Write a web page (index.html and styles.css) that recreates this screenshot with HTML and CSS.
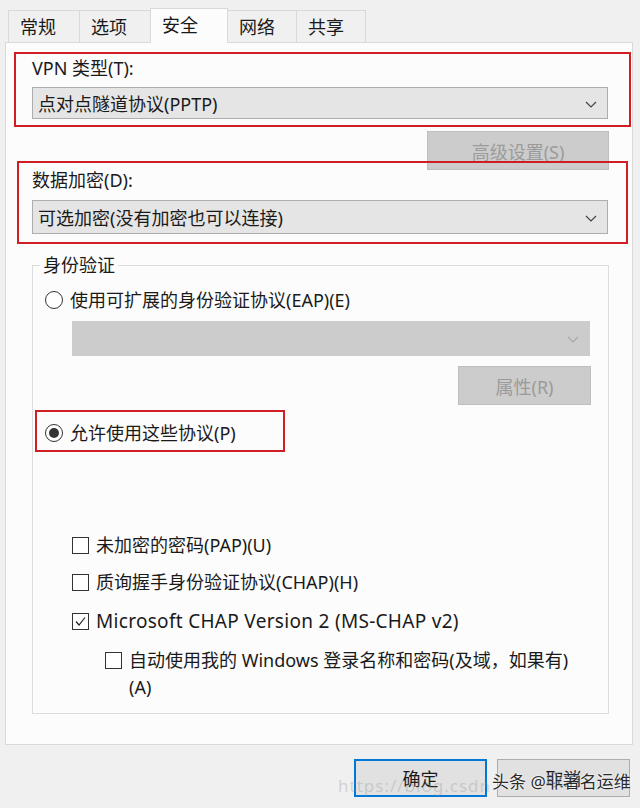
FILE: index.html
```html
<!DOCTYPE html>
<html lang="zh-CN">
<head>
    <meta charset="UTF-8">
    <meta name="viewport" content="width=device-width, initial-scale=1.0">
    <title>VPN 属性 - 安全</title>
    <link rel="stylesheet" href="styles.css">
</head>
<body>
    <div class="window">
        <!-- tab strip -->
        <div class="tabs">
            <div class="tab">常规</div>
            <div class="tab">选项</div>
            <div class="tab active">安全</div>
            <div class="tab">网络</div>
            <div class="tab">共享</div>
        </div>

        <div class="panel">
            <div class="mark mark-vpn">
                <div class="label">VPN 类型(T):</div>
                <div class="combo">
                    <span>点对点隧道协议(PPTP)</span>
                    <svg class="chevron" width="12" height="7" viewBox="0 0 12 7"><polyline points="1,1 6,6 11,1" fill="none" stroke="#444" stroke-width="1.2"/></svg>
                </div>
            </div>

            <div class="btn-row adv-row">
                <div class="btn disabled adv">高级设置(S)</div>
            </div>

            <div class="mark mark-enc">
                <div class="label">数据加密(D):</div>
                <div class="combo combo-enc">
                    <span>可选加密(没有加密也可以连接)</span>
                    <svg class="chevron" width="12" height="7" viewBox="0 0 12 7"><polyline points="1,1 6,6 11,1" fill="none" stroke="#444" stroke-width="1.2"/></svg>
                </div>
            </div>

            <div class="group">
                <div class="group-title">身份验证</div>

                <div class="option radio-eap">
                    <span class="radio"></span>
                    <span>使用可扩展的身份验证协议(EAP)(E)</span>
                </div>
                <div class="combo disabled eap-combo">
                    <span></span>
                    <svg class="chevron" width="12" height="7" viewBox="0 0 12 7"><polyline points="1,1 6,6 11,1" fill="none" stroke="#a8a8a8" stroke-width="1.2"/></svg>
                </div>
                <div class="btn-row prop-row">
                    <div class="btn disabled prop">属性(R)</div>
                </div>

                <div class="mark mark-allow">
                    <div class="option">
                        <span class="radio checked"></span>
                        <span>允许使用这些协议(P)</span>
                    </div>
                </div>

                <div class="option check-row row-pap">
                    <span class="checkbox"></span>
                    <span>未加密的密码(PAP)(U)</span>
                </div>
                <div class="option check-row row-chap">
                    <span class="checkbox"></span>
                    <span>质询握手身份验证协议(CHAP)(H)</span>
                </div>
                <div class="option check-row row-ms">
                    <span class="checkbox">
                        <svg width="15" height="15" viewBox="0 0 15 15"><polyline points="3,7.5 6,11 12,3.5" fill="none" stroke="#222" stroke-width="1.2"/></svg>
                    </span>
                    <span class="latin">Microsoft CHAP Version 2 (MS-CHAP v2)</span>
                </div>
                <div class="option check-row row-auto">
                    <span class="checkbox"></span>
                    <span class="wrap">自动使用我的 Windows 登录名称和密码(及域，如果有)<br>(A)</span>
                </div>
            </div>
        </div>

        <div class="footer">
            <div class="btn default">确定</div>
            <div class="btn">取消</div>
        </div>

        <!-- watermark lies over the dialog buttons -->
        <div class="wm-url">https://blog.csdn</div>
        <div class="wm-name">头条 @非著名运维</div>
    </div>
</body>
</html>
```

FILE: styles.css
```css
body {
    margin: 0;
    background-color: #f0f0f0;
    font-family: "Noto Sans", "Noto Sans CJK SC", sans-serif;
    font-size: 18px;
    color: #1a1a1a;
}
.window {
    position: relative;
    width: 640px;
    height: 808px;
    overflow: hidden;
}

/* tabs */
.tabs {
    display: flex;
    align-items: flex-end;
    height: 34px;
    padding-top: 8px;
    padding-left: 8px;
}
.tab {
    height: 32px;
    line-height: 32px;
    padding: 0 11px;
    width: 71px;
    box-sizing: border-box;
    border: 1px solid #d9d9d9;
    border-bottom: none;
    border-right: none;
    background-color: #f0f0f0;
}
.tab:nth-child(4) {
    width: 68px;
}
.tab:last-child {
    width: 70px;
    border-right: 1px solid #d9d9d9;
}
.tab.active {
    height: 35px;
    line-height: 33px;
    width: 78px;
    background-color: #fcfcfc;
    border-right: 1px solid #d9d9d9;
    position: relative;
    margin-bottom: -1px;
    z-index: 2;
}
.tab.active + .tab {
    border-left: none;
}

/* main panel */
.panel {
    margin-left: 5px;
    width: 628px;
    height: 703px;
    box-sizing: border-box;
    border: 1px solid #d9d9d9;
    background-color: #fcfcfc;
}

/* red annotation boxes */
.mark {
    position: relative;
    box-sizing: border-box;
    border: 2px solid #cf1f24;
}
.mark-vpn {
    margin: 9px 0 0 8px;
    width: 617px;
    height: 75px;
    padding: 3px 21px 0 16px;
}
.mark-enc {
    margin: -9px 0 0 11px;
    width: 611px;
    height: 83px;
    padding: 6px 18px 0 13px;
}
.mark-allow {
    margin: 5px 0 0 2px;
    width: 250px;
    height: 42px;
    padding: 9px 0 0 8px;
}
.label {
    line-height: 22px;
}

/* combo boxes */
.combo {
    display: flex;
    align-items: center;
    justify-content: space-between;
    margin-top: 8px;
    height: 32px;
    box-sizing: border-box;
    border: 1px solid #adadad;
    background-color: #e5e5e5;
    padding: 0 10px 0 5px;
}
.combo-enc {
    margin-top: 9px;
    height: 34px;
}
.combo.disabled {
    border-color: #cccccc;
    background-color: #cccccc;
}
.eap-combo {
    margin: 9px 0 0 39px;
    width: 518px;
    height: 35px;
}
.chevron {
    margin-top: 2px;
}

/* buttons */
.btn-row {
    display: flex;
    justify-content: flex-end;
}
.adv-row {
    margin-top: 4px;
    padding-right: 23px;
}
.prop-row {
    margin-top: 10px;
    padding-right: 17px;
}
.btn {
    display: flex;
    align-items: center;
    justify-content: center;
    box-sizing: border-box;
    border: 1px solid #adadad;
    background-color: #e1e1e1;
}
.btn.disabled {
    border-color: #bfbfbf;
    background-color: #cccccc;
    color: #9b9b9b;
}
.adv {
    width: 182px;
    height: 39px;
}
.prop {
    width: 133px;
    height: 39px;
}

/* authentication group */
.group {
    margin: 21px 0 0 26px;
    width: 577px;
    height: 449px;
    box-sizing: border-box;
    border: 1px solid #dcdcdc;
}
.group-title {
    width: fit-content;
    margin: -12px 0 0 7px;
    padding: 0 3px;
    line-height: 22px;
    background-color: #fcfcfc;
}
.option {
    display: flex;
    align-items: center;
    gap: 7px;
    line-height: 24px;
}
.radio-eap {
    margin-top: 12px;
    padding-left: 12px;
}
.radio {
    width: 18px;
    height: 18px;
    box-sizing: border-box;
    border: 1.5px solid #333;
    border-radius: 50%;
    background-color: #fff;
    display: flex;
    align-items: center;
    justify-content: center;
}
.radio.checked::after {
    content: "";
    width: 10px;
    height: 10px;
    border-radius: 50%;
    background-color: #333;
}
.check-row {
    padding-left: 39px;
    line-height: 26px;
    align-items: flex-start;
}
.check-row .checkbox {
    margin-top: 5px;
}
.latin {
    font-size: 19px;
    letter-spacing: 0.3px;
}
.row-pap {
    margin-top: 80px;
}
.row-chap {
    margin-top: 11px;
}
.row-ms,
.row-auto {
    margin-top: 13px;
}
.row-auto {
    padding-left: 72px;
    line-height: 27px;
}
.checkbox {
    flex: none;
    width: 17px;
    height: 17px;
    box-sizing: border-box;
    border: 1px solid #333;
    background-color: #fff;
    display: flex;
    align-items: center;
    justify-content: center;
}

/* dialog buttons */
.footer {
    display: flex;
    justify-content: flex-end;
    gap: 10px;
    margin-top: 14px;
    padding-right: 10px;
}
.footer .btn {
    width: 133px;
    height: 38px;
}
.footer .btn.default {
    border: 2px solid #0078d7;
}

/* watermark */
.wm-url,
.wm-name {
    position: absolute;
    white-space: nowrap;
    line-height: 26px;
}
.wm-url {
    left: 338px;
    top: 773px;
    font-size: 17px;
    letter-spacing: 1px;
    color: rgba(150, 150, 150, 0.35);
}
.wm-name {
    left: 492px;
    top: 769px;
    font-size: 17px;
    color: #2a2a2a;
    text-shadow: 0 0 2px #fff, 0 0 2px #fff;
}
```
